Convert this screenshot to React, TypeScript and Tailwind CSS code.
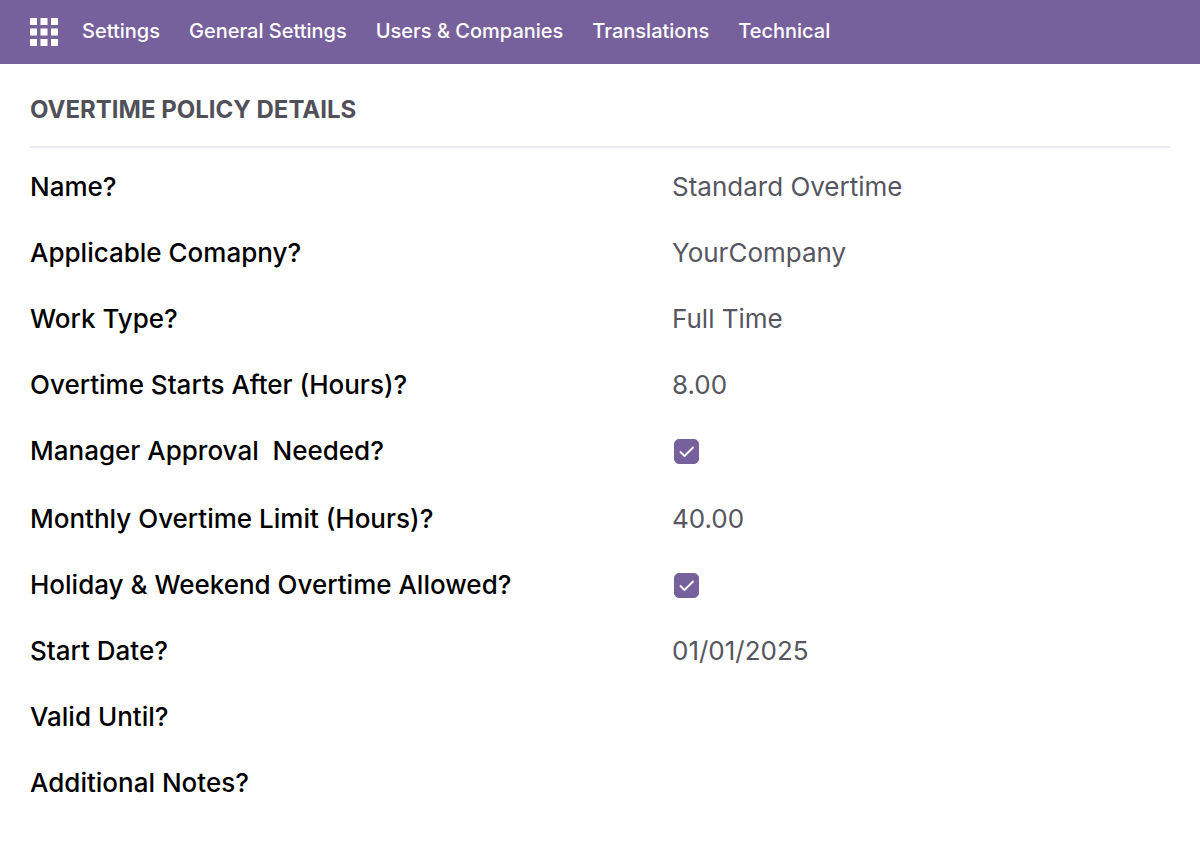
import { ReactNode, useState } from "react";

const menuItems = ["Settings", "General Settings", "Users & Companies", "Translations", "Technical"];

function AppsIcon() {
  const offsets = [0, 10.5, 21];
  return (
    <svg className="size-7" viewBox="0 0 28 28" fill="currentColor" aria-hidden="true">
      {offsets.map((y) => offsets.map((x) => <rect key={`${x}-${y}`} x={x} y={y} width="7" height="7" />))}
    </svg>
  );
}

function Row({ label, htmlFor, children }: { label: string; htmlFor: string; children: ReactNode }) {
  return (
    <div className="grid min-h-8 grid-cols-[642fr_498fr] items-center">
      <label htmlFor={htmlFor} className="font-medium whitespace-pre-wrap text-black">
        {label}
      </label>
      {children}
    </div>
  );
}

function TextRow({ id, label, value = "" }: { id: string; label: string; value?: string }) {
  return (
    <Row label={label} htmlFor={id}>
      <output id={id} className="text-[#55565f]">
        {value}
      </output>
    </Row>
  );
}

function CheckRow({ id, label }: { id: string; label: string }) {
  const [checked, setChecked] = useState(true);
  return (
    <Row label={label} htmlFor={id}>
      <span className="grid size-7 place-items-center">
        <input
          id={id}
          type="checkbox"
          checked={checked}
          onChange={(e) => setChecked(e.target.checked)}
          className="peer col-start-1 row-start-1 size-[25px] appearance-none rounded-[5px] border border-[#77619c] checked:bg-[#77619c]"
        />
        <svg
          className="pointer-events-none invisible col-start-1 row-start-1 size-[25px] text-white peer-checked:visible"
          viewBox="0 0 25 25"
          fill="none"
          stroke="currentColor"
          strokeWidth="1.8"
          aria-hidden="true"
        >
          <path d="M6.5 13l4 4 8.5-8.5" strokeLinecap="round" strokeLinejoin="round" />
        </svg>
      </span>
    </Row>
  );
}

export default function App() {
  return (
    <div className="min-h-screen bg-white font-['Inter',sans-serif]">
      <nav className="flex h-16 items-center gap-6 bg-[#77619c] px-[30px] text-white">
        <button type="button" aria-label="Apps">
          <AppsIcon />
        </button>
        <ul className="flex gap-[29px] pb-0.5 text-xl font-medium">
          {menuItems.map((item) => (
            <li key={item}>
              <a href="#">{item}</a>
            </li>
          ))}
        </ul>
      </nav>
      <main className="px-[30px] pt-[30px]">
        <h1 className="border-b-2 border-[#ececf2] pb-5 text-2xl font-bold text-[#505158]">OVERTIME POLICY DETAILS</h1>
        <div className="flex flex-col gap-9 pt-[23px] text-[26px] leading-8">
          <section className="flex flex-col gap-[34px]">
            <TextRow id="name" label="Name?" value="Standard Overtime" />
            <TextRow id="company" label="Applicable Comapny?" value="YourCompany" />
            <TextRow id="work-type" label="Work Type?" value="Full Time" />
            <TextRow id="starts-after" label="Overtime Starts After (Hours)?" value="8.00" />
            <CheckRow id="approval" label="Manager Approval  Needed?" />
          </section>
          <section className="flex flex-col gap-[34px]">
            <TextRow id="limit" label="Monthly Overtime Limit (Hours)?" value="40.00" />
            <CheckRow id="holiday" label="Holiday & Weekend Overtime Allowed?" />
            <TextRow id="start-date" label="Start Date?" value="01/01/2025" />
            <TextRow id="valid-until" label="Valid Until?" />
            <TextRow id="notes" label="Additional Notes?" />
          </section>
        </div>
      </main>
    </div>
  );
}
